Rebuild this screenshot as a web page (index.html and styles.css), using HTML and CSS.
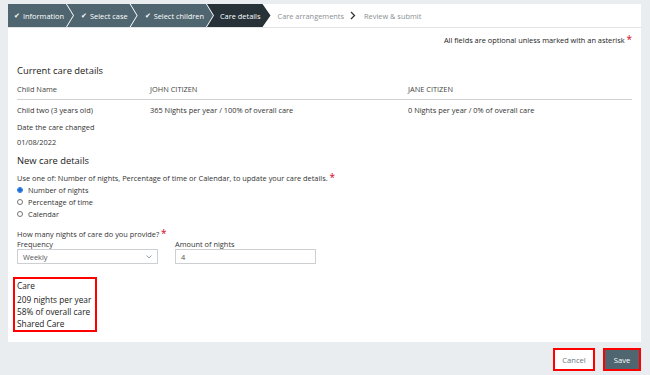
FILE: index.html
```html
<!DOCTYPE html>
<html lang="en">
<head>
  <meta charset="UTF-8" />
  <meta name="viewport" content="width=device-width, initial-scale=1.0"/>
  <title>Care details</title>
  <link rel="stylesheet" href="styles.css">
</head>
<body>

  <div class="card">
    <!-- Etapes -->
    <nav class="stepper">
      <div class="step done first"><span class="tick">&#10004;</span>Information</div>
      <div class="step done"><span class="tick">&#10004;</span>Select case</div>
      <div class="step done"><span class="tick">&#10004;</span>Select children</div>
      <div class="step current">Care details</div>
      <div class="step todo">Care arrangements</div>
      <svg class="sep" width="6" height="9" viewBox="0 0 6 9"><path d="M1 1l3.5 3.5L1 8" fill="none" stroke="#333" stroke-width="1.3"/></svg>
      <div class="step todo">Review &amp; submit</div>
    </nav>

    <div class="content">
      <p class="note">All fields are optional unless marked with an asterisk <span class="req">*</span></p>

      <h2>Current care details</h2>
      <div class="care-table">
        <div class="th">Child Name</div>
        <div class="th">JOHN CITIZEN</div>
        <div class="th">JANE CITIZEN</div>
        <div class="td">Child two (3 years old)</div>
        <div class="td">365 Nights per year / 100% of overall care</div>
        <div class="td">0 Nights per year / 0% of overall care</div>
      </div>
      <p class="label">Date the care changed</p>
      <p class="value">01/08/2022</p>

      <h2 class="second">New care details</h2>
      <p class="line">Use one of: Number of nights, Percentage of time or Calendar, to update your care details. <span class="req">*</span></p>
      <label class="radio"><span class="dot checked"></span>Number of nights</label>
      <label class="radio"><span class="dot"></span>Percentage of time</label>
      <label class="radio"><span class="dot"></span>Calendar</label>

      <p class="question">How many nights of care do you provide? <span class="req">*</span></p>
      <div class="fields">
        <div class="field">
          <div class="field-label">Frequency</div>
          <div class="select">
            <span>Weekly</span>
            <svg width="6" height="4" viewBox="0 0 6 4"><path d="M0.5 0.5L3 3l2.5-2.5" fill="none" stroke="#888" stroke-width="0.8"/></svg>
          </div>
        </div>
        <div class="field">
          <div class="field-label">Amount of nights</div>
          <div class="input">4</div>
        </div>
      </div>

      <div class="result">
        <div class="result-title">Care</div>
        <div>209 nights per year</div>
        <div>58% of overall care</div>
        <div>Shared Care</div>
      </div>
    </div>
  </div>

  <div class="actions">
    <button class="btn cancel">Cancel</button>
    <button class="btn save">Save</button>
  </div>

</body>
</html>
```

FILE: styles.css
```css
body {
  margin: 0;
  padding: 4px 9px 0 8px;
  background: #e9edf0;
  font-family: 'Open Sans', sans-serif;
  font-size: 7.4px;
  color: #333;
}

p {
  margin: 0;
}

.card {
  background: #fff;
  padding-bottom: 10px;
}

/* Etapes */
.stepper {
  display: flex;
  align-items: center;
  height: 23px;
  border-bottom: 1px solid #e2e5e7;
}

.step {
  height: 23px;
  display: flex;
  align-items: center;
  white-space: nowrap;
}

.step.done {
  background: #4f6670;
  color: #fff;
  padding: 0 9px 0 14px;
  margin-left: -6px;
  clip-path: polygon(0 0, calc(100% - 7px) 0, 100% 50%, calc(100% - 7px) 100%, 0 100%, 7px 50%);
}

.step.first {
  margin-left: 0;
  padding-left: 6px;
  clip-path: polygon(0 0, calc(100% - 7px) 0, 100% 50%, calc(100% - 7px) 100%, 0 100%);
}

.step.current {
  background: #263238;
  color: #fff;
  padding: 0 10px 0 13px;
  margin-left: -6px;
  clip-path: polygon(0 0, calc(100% - 8px) 0, 100% 50%, calc(100% - 8px) 100%, 0 100%, 7px 50%);
}

.step.todo {
  color: #8a8f93;
  padding-left: 7px;
}

.sep {
  margin-left: 6px;
  margin-right: 1px;
}

.tick {
  font-size: 6.5px;
  margin-right: 3px;
}

.content {
  padding: 0 9px;
}

.note {
  margin-top: 5px;
  line-height: 12px;
  text-align: right;
  color: #222;
}

.req {
  color: #d0021b;
  font-size: 10px;
}

h2 {
  margin: 18px 0 0;
  font-size: 9.4px;
  font-weight: normal;
  line-height: 14px;
  color: #222;
}

h2.second {
  margin-top: 6px;
}

.care-table {
  margin-top: 5px;
  display: grid;
  grid-template-columns: 133px 258px 1fr;
  line-height: 12px;
}

.th {
  padding-bottom: 4px;
  border-bottom: 1px solid #cfd3d6;
  color: #444;
}

.td {
  padding-top: 4px;
}

.label {
  margin-top: 5px;
  line-height: 12px;
}

.value {
  margin-top: 3px;
  line-height: 12px;
}

.line {
  margin-top: 3px;
  line-height: 12px;
}

.radio {
  display: flex;
  align-items: center;
  height: 12px;
}

.dot {
  width: 4px;
  height: 4px;
  border: 1px solid #777;
  border-radius: 50%;
  margin: 0 5px 0 0;
  box-sizing: content-box;
}

.dot.checked {
  border-color: #1e6fd9;
  background: radial-gradient(circle, #1e6fd9 0 1.6px, #fff 2.2px);
}

.question {
  margin-top: 8px;
  line-height: 10px;
}

.fields {
  display: flex;
  gap: 17px;
}

.field-label {
  line-height: 10px;
}

.select,
.input {
  height: 15px;
  box-sizing: border-box;
  border: 1px solid #ccd0d3;
  display: flex;
  align-items: center;
  padding: 0 5px;
  color: #555;
}

.select {
  width: 141px;
  justify-content: space-between;
  padding-right: 5px;
}

.input {
  width: 141px;
}

.result {
  margin: 13px 0 0 -4px;
  width: 84px;
  box-sizing: border-box;
  border: 2px solid #ff0000;
  padding: 1px 0 0 2px;
  font-size: 8.3px;
  line-height: 12px;
  color: #222;
}

.result-title {
  margin-bottom: 2px;
}

.actions {
  margin-top: 6px;
  display: flex;
  justify-content: flex-end;
  gap: 8px;
}

.btn {
  height: 23px;
  border: 2px solid #ff0000;
  font-family: 'Open Sans', sans-serif;
  font-size: 7.6px;
  padding: 0;
}

.btn.cancel {
  width: 42px;
  background: #fff;
  color: #6b757b;
}

.btn.save {
  width: 38px;
  background: #4f6670;
  color: #fff;
}
```
